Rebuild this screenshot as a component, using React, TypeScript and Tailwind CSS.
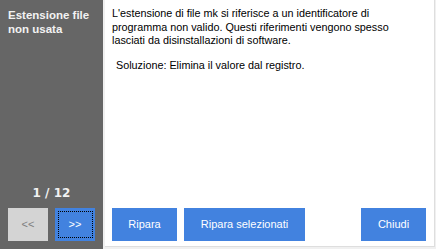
import React from "react";

const App = () => {
  return (
    <div
      className="flex w-[436px] h-[249px] bg-[#f0f0f0] overflow-hidden"
      style={{ fontFamily: "Tahoma, 'Liberation Sans', Arial, sans-serif" }}
    >
      <div className="w-[103px] h-full bg-[#666666] flex flex-col text-[#f2f2f2]">
        <div className="px-[8px] pt-[8px] font-bold text-[11.5px] leading-[14px]">
          Estensione file non usata
        </div>
        <div className="flex-1" />
        <div className="text-center font-bold text-[12px] leading-[16px] mb-[7px] font-['DejaVu_Sans',sans-serif]">
          1 / 12
        </div>
        <div className="flex gap-[7px] px-[8px] mb-[8px]">
          <button className="w-[41px] h-[33px] bg-[#d4d4d4] text-[#7f7f7f] text-[11px]">&lt;&lt;</button>
          <button className="w-[41px] h-[33px] bg-[#4282df] text-white text-[11px] flex items-center justify-center">
            <span className="w-[35px] h-[27px] border border-dotted border-black flex items-center justify-center">
              &gt;&gt;
            </span>
          </button>
        </div>
      </div>
      <div className="ml-[2px] w-[330px] h-[247px] bg-white border-r border-b border-[#dedede] flex flex-col text-black text-[10.8px]">
        <div className="pl-[7px] pr-[10px] pt-[7px] leading-[13.5px]">
          <p>
            L'estensione di file mk si riferisce a un identificatore di programma non valido. Questi riferimenti
            vengono spesso lasciati da disinstallazioni di software.
          </p>
          <p className="mt-[11px] pl-[4px]">Soluzione: Elimina il valore dal registro.</p>
        </div>
        <div className="flex-1" />
        <div className="flex gap-[7px] pl-[7px] pr-[8px] mb-[5px] text-white text-[11px]">
          <button className="w-[65px] h-[33px] bg-[#4282df]">Ripara</button>
          <button className="w-[121px] h-[33px] bg-[#4282df]">Ripara selezionati</button>
          <div className="flex-1" />
          <button className="w-[65px] h-[33px] bg-[#4282df]">Chiudi</button>
        </div>
      </div>
    </div>
  );
};

export default App;
